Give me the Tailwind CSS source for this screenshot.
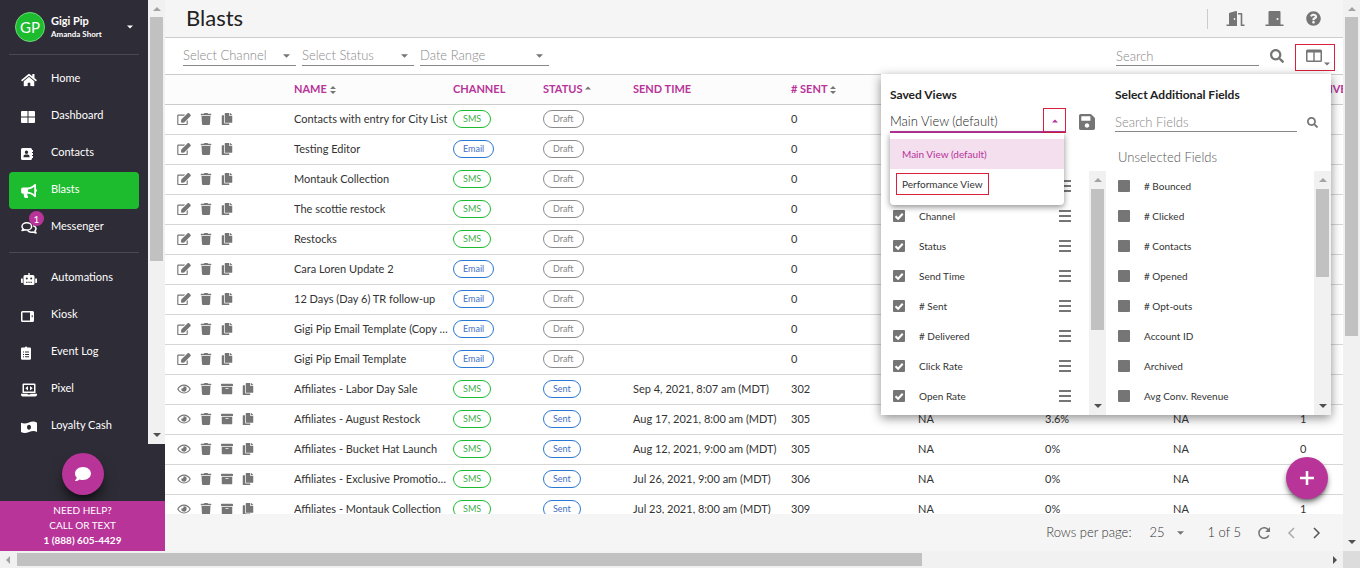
<!DOCTYPE html>
<html lang="en">
<head>
  <meta charset="UTF-8" />
  <meta name="viewport" content="width=device-width, initial-scale=1" />
  <title>Blasts</title>
  <script src="https://cdn.jsdelivr.net/npm/@tailwindcss/browser@4"></script>
</head>
<body class="h-screen flex flex-col overflow-hidden bg-white font-[Lato,'Open_Sans',sans-serif] text-[11px] text-[#333]">

  <!-- icon set -->
  <svg class="hidden">
    <symbol id="home" viewBox="0 0 576 512"><path d="M280.37 148.26L96 300.11V464a16 16 0 0 0 16 16l112.06-.29a16 16 0 0 0 15.92-16V368a16 16 0 0 1 16-16h64a16 16 0 0 1 16 16v95.64a16 16 0 0 0 16 16.05L464 480a16 16 0 0 0 16-16V300L295.67 148.26a12.19 12.19 0 0 0-15.3 0zM571.6 251.47L488 182.56V44.05a12 12 0 0 0-12-12h-56a12 12 0 0 0-12 12v72.61L318.47 43a48 48 0 0 0-61 0L4.34 251.47a12 12 0 0 0-1.6 16.9l25.5 31A12 12 0 0 0 45.15 301l235.22-193.74a12.19 12.19 0 0 1 15.3 0L530.9 301a12 12 0 0 0 16.9-1.6l25.5-31a12 12 0 0 0-1.7-16.93z"/></symbol>
    <symbol id="dashboard" viewBox="0 0 14 14" preserveAspectRatio="xMinYMid"><path d="M1 1h5.500v5.500H0V2a1 1 0 0 1 1-1zM7.500 1H13a1 1 0 0 1 1 1v4.500H7.500zM0 7.500h6.500V13H1a1 1 0 0 1-1-1zM7.500 7.500H14V12a1 1 0 0 1-1 1H7.500z"/></symbol>
    <symbol id="contacts" viewBox="0 0 14 14" preserveAspectRatio="xMinYMid"><path fill-rule="evenodd" d="M1.500 1h8A1.500 1.500 0 0 1 11 2.500v9a1.500 1.500 0 0 1-1.500 1.500h-8A1.500 1.500 0 0 1 0 11.500v-9A1.500 1.500 0 0 1 1.500 1zM5.500 3.500a1.700 1.700 0 1 0 0 3.400 1.700 1.700 0 0 0 0-3.400zM2.500 10.200h6v-.8C8.500 8.200 7.500 7.500 6.500 7.500H4.500C3.500 7.500 2.500 8.200 2.500 9.400z"/><path d="M11 3h1v2h-1zM11 6h1v2h-1zM11 9h1v2h-1z"/></symbol>
    <symbol id="bullhorn" viewBox="0 0 576 512"><path d="M576 240c0-23.63-12.95-44.04-32-55.12V32.01C544 23.26 537.02 0 512 0c-7.12 0-14.19 2.38-19.98 7.02l-85.03 68.03C364.28 109.19 310.66 128 256 128H64c-35.35 0-64 28.65-64 64v96c0 35.35 28.65 64 64 64h33.7c-1.39 10.48-2.18 21.14-2.18 32 0 39.77 9.26 77.35 25.56 110.94 5.19 10.69 16.52 17.06 28.4 17.06h74.28c26.05 0 41.69-29.84 25.9-50.56-16.4-21.52-26.15-48.36-26.15-77.44 0-11.11 1.62-21.79 4.41-32H256c54.66 0 108.28 18.81 150.98 52.95l85.03 68.03a32.023 32.023 0 0 0 19.98 7.02c24.92 0 32-22.78 32-32V295.13C563.05 284.04 576 263.63 576 240zm-96 141.42l-33.05-26.44C392.95 311.78 325.12 288 256 288v-96c69.12 0 136.95-23.78 190.95-66.98L480 98.58v282.84z"/></symbol>
    <symbol id="messenger" viewBox="0 0 16 14"><path fill="none" stroke="currentColor" stroke-width="1.500" stroke-linejoin="round" d="M5.800 1.800c2.700 0 4.800 1.500 4.800 3.600S8.500 9 5.800 9c-.7 0-1.400-.1-2-.3-.8.6-1.700.9-2.800.9.600-.6 1-1.200 1.200-1.900C1.400 7 1 6.200 1 5.400c0-2.100 2.100-3.600 4.800-3.600zM12 4.600c1.800.5 3 1.700 3 3.200 0 .8-.4 1.600-1.100 2.200.2.700.5 1.300 1.100 1.900-1.100 0-2-.3-2.800-.9-2.200.6-4.400 0-5.400-1.500"/></symbol>
    <symbol id="robot" viewBox="0 0 16 14"><path fill-rule="evenodd" d="M7.300 1h1.400v2H12a1.500 1.500 0 0 1 1.500 1.500V11.500A1.500 1.500 0 0 1 12 13H4a1.500 1.500 0 0 1-1.500-1.500v-7A1.500 1.500 0 0 1 4 3h3.300zM5.800 5.500a1 1 0 1 0 0 2 1 1 0 0 0 0-2zM10.200 5.500a1 1 0 1 0 0 2 1 1 0 0 0 0-2zM5 9.800v1h1.500v-1zM7.300 9.800v1h1.500v-1zM9.500 9.800v1H11v-1z"/><path d="M0 6.500h1.800V11H.8a.8.8 0 0 1-.8-.8zM14.200 6.500H16v3.700a.8.8 0 0 1-.8.8h-1z"/></symbol>
    <symbol id="kiosk" viewBox="0 0 14 14" preserveAspectRatio="xMinYMid"><path fill-rule="evenodd" d="M1 2h10.500A1.500 1.500 0 0 1 13 3.500v8a1.500 1.500 0 0 1-1.500 1.500H1.500A1.500 1.500 0 0 1 0 11.500V3.500A1.500 1.500 0 0 1 1.500 2zM1.500 3.600v7.800h7.500V3.600zM10.700 6.200v2h1v-2z"/></symbol>
    <symbol id="clipboard" viewBox="0 0 14 14" preserveAspectRatio="xMinYMid"><path fill-rule="evenodd" d="M3.800 1.500a1.300 1.300 0 0 1 2.500 0H8.800A1.200 1.200 0 0 1 10 2.700v9.800a1.200 1.200 0 0 1-1.200 1.200H1.200A1.200 1.200 0 0 1 0 12.500V2.700a1.200 1.200 0 0 1 1.200-1.200zM2 5.500v1h1v-1zM4 5.500v1h4v-1zM2 7.900v1h1v-1zM4 7.900v1h4v-1zM2 10.300v1h1v-1zM4 10.300v1h4v-1z"/></symbol>
    <symbol id="laptop" viewBox="0 0 16 14"><path fill-rule="evenodd" d="M2.500.5h11a1 1 0 0 1 1 1V10h-13V1.500a1 1 0 0 1 1-1zM3 2v6.500h10V2zM0 10.800h6.500l.5.700h2l.5-.7H16v1a1.700 1.700 0 0 1-1.700 1.700H1.700A1.700 1.700 0 0 1 0 11.800z"/><path d="M4.300 5.200L7 3v4.500zM11.700 5.200L9 3v4.500z"/></symbol>
    <symbol id="cash" viewBox="0 0 16 14"><path fill-rule="evenodd" d="M0 2.700C2.700 4 5.300 3.500 8 2.500s5.300-1.500 8 .2v9.200c-2.700-1.300-5.300-.8-8 .2s-5.300 1.500-8-.2zM8 4.800c-1.200 0-2 1.100-2 2.500s.8 2.500 2 2.500 2-1.100 2-2.500-.8-2.500-2-2.500z"/></symbol>
    <symbol id="trash" viewBox="0 0 448 512"><path d="M432 32H312l-9.400-18.700A24 24 0 0 0 281.100 0H166.800a23.720 23.720 0 0 0-21.400 13.300L136 32H16A16 16 0 0 0 0 48v32a16 16 0 0 0 16 16h416a16 16 0 0 0 16-16V48a16 16 0 0 0-16-16zM53.200 467a48 48 0 0 0 47.900 45h245.800a48 48 0 0 0 47.900-45L416 128H32z"/></symbol>
    <symbol id="edit" viewBox="0 0 576 512"><path d="M402.300 344.900l32-32c5-5 13.700-1.500 13.700 5.700V464c0 26.500-21.500 48-48 48H48c-26.500 0-48-21.500-48-48V112c0-26.500 21.500-48 48-48h273.500c7.100 0 10.700 8.600 5.700 13.700l-32 32c-1.500 1.500-3.500 2.300-5.700 2.300H48v352h352V350.500c0-2.100.8-4.100 2.300-5.600zM558.900 143.100L296.300 405.700l-90.400 10c-26.200 2.900-48.500-19.200-45.600-45.600l10-90.400L432.900 17.100c22.900-22.900 59.900-22.900 82.700 0l43.200 43.200c22.900 22.900 22.900 60 .1 82.800z"/></symbol>
    <symbol id="copy" viewBox="0 0 448 512"><path d="M320 448v40c0 13.255-10.745 24-24 24H24c-13.255 0-24-10.745-24-24V120c0-13.255 10.745-24 24-24h72v296c0 30.879 25.121 56 56 56h168zm0-344V0H152c-13.255 0-24 10.745-24 24v368c0 13.255 10.745 24 24 24h272c13.255 0 24-10.745 24-24V128H344c-13.200 0-24-10.800-24-24zm120.971-31.029L375.029 7.029A24 24 0 0 0 358.059 0H352v96h96v-6.059a24 24 0 0 0-7.029-16.970z"/></symbol>
    <symbol id="archive" viewBox="0 0 512 512"><path d="M32 448c0 17.700 14.300 32 32 32h384c17.700 0 32-14.300 32-32V160H32v288zm160-212c0-6.600 5.400-12 12-12h104c6.600 0 12 5.400 12 12v8c0 6.600-5.400 12-12 12H204c-6.600 0-12-5.400-12-12v-8zM480 32H32C14.300 32 0 46.300 0 64v48c0 8.800 7.200 16 16 16h480c8.800 0 16-7.200 16-16V64c0-17.700-14.300-32-32-32z"/></symbol>
    <symbol id="eye" viewBox="0 0 576 512"><path d="M288 144a110.940 110.940 0 0 0-31.240 5 55.400 55.400 0 0 1 7.240 27 56 56 0 0 1-56 56 55.400 55.400 0 0 1-27-7.240A111.710 111.710 0 1 0 288 144zm284.520 97.400C518.290 135.590 410.930 64 288 64S57.680 135.640 3.480 241.410a32.350 32.350 0 0 0 0 29.190C57.710 376.410 165.070 448 288 448s230.320-71.640 284.520-177.410a32.350 32.350 0 0 0 0-29.190zM288 400c-98.650 0-189.090-55-237.930-144C98.910 167 189.340 112 288 112s189.090 55 237.930 144C477.100 345 386.660 400 288 400z"/></symbol>
    <symbol id="search" viewBox="0 0 512 512"><path d="M505 442.700L405.300 343c-4.500-4.500-10.600-7-17-7H372c27.600-35.300 44-79.700 44-128C416 93.100 322.900 0 208 0S0 93.100 0 208s93.100 208 208 208c48.300 0 92.700-16.400 128-44v16.300c0 6.400 2.500 12.500 7 17l99.700 99.700c9.400 9.400 24.600 9.400 33.900 0l28.300-28.300c9.400-9.400 9.400-24.600.1-34zM208 336c-70.700 0-128-57.200-128-128 0-70.700 57.200-128 128-128 70.700 0 128 57.200 128 128 0 70.700-57.200 128-128 128z"/></symbol>
    <symbol id="columns" viewBox="0 0 16 14"><path fill-rule="evenodd" d="M1.500.5h13A1.500 1.500 0 0 1 16 2v9.500a1.500 1.500 0 0 1-1.500 1.500h-13A1.500 1.500 0 0 1 0 11.500V2A1.500 1.500 0 0 1 1.500.5zM1.500 3.500v8h5.800v-8zM8.700 3.500v8h5.800v-8z"/></symbol>
    <symbol id="save" viewBox="0 32 448 448"><path d="M433.941 129.941l-83.882-83.882A48 48 0 0 0 316.118 32H48C21.490 32 0 53.490 0 80v352c0 26.510 21.490 48 48 48h352c26.510 0 48-21.490 48-48V163.882a48 48 0 0 0-14.059-33.941zM224 416c-35.346 0-64-28.654-64-64 0-35.346 28.654-64 64-64s64 28.654 64 64c0 35.346-28.654 64-64 64zm96-304.520V212c0 6.627-5.373 12-12 12H76c-6.627 0-12-5.373-12-12V108c0-6.627 5.373-12 12-12h228.520c3.183 0 6.235 1.264 8.485 3.515l3.480 3.480A11.996 11.996 0 0 1 320 111.480z"/></symbol>
    <symbol id="comment" viewBox="0 0 512 512"><path d="M256 32C114.600 32 0 125.100 0 240c0 49.600 21.400 95 57 130.700C44.500 421.100 2.700 466 2.200 466.500c-2.200 2.300-2.800 5.700-1.500 8.700S4.800 480 8 480c66.300 0 116-31.800 140.600-51.400 32.700 12.300 69 19.400 107.400 19.400 141.400 0 256-93.100 256-208S397.400 32 256 32z"/></symbol>
    <symbol id="question" viewBox="0 0 512 512"><path d="M504 256c0 136.997-111.043 248-248 248S8 392.997 8 256C8 119.083 119.043 8 256 8s248 111.083 248 248zM262.655 90c-54.497 0-89.255 22.957-116.549 63.758-3.536 5.286-2.353 12.415 2.715 16.258l34.699 26.310c5.205 3.947 12.621 3.008 16.665-2.122 17.864-22.658 30.113-35.797 57.303-35.797 20.429 0 45.698 13.148 45.698 32.958 0 14.976-12.363 22.667-32.534 33.976C247.128 238.528 216 254.941 216 296v4c0 6.627 5.373 12 12 12h56c6.627 0 12-5.373 12-12v-1.333c0-28.462 83.186-29.647 83.186-106.667 0-58.002-60.165-102-116.531-102zM256 338c-25.365 0-46 20.635-46 46 0 25.364 20.635 46 46 46s46-20.636 46-46c0-25.365-20.635-46-46-46z"/></symbol>
    <symbol id="door-open" viewBox="0 0 18 16"><path fill-rule="evenodd" d="M10.500.7V15H0v-1.600h2.500V2.700c0-.5.3-.8.7-.9L9.400.1c.6-.2 1.100.1 1.100.6zM8 7a.8 1 0 1 0 0 2 .8 1 0 0 0 0-2z"/><path d="M11.500 2H15c.5 0 .8.400.8.800v10.600H18V15h-3.800V3.600h-2.700z"/></symbol>
    <symbol id="door" viewBox="0 0 18 16"><path fill-rule="evenodd" d="M4.200 0h9.600c.7 0 1.200.5 1.200 1.200v12.200h3V15H0v-1.600h3V1.200C3 .5 3.500 0 4.200 0zM12 6.900a1.100 1.100 0 1 0 0 2.200 1.100 1.100 0 0 0 0-2.200z"/></symbol>
    <symbol id="refresh" viewBox="0 0 14 14"><path fill="none" stroke="currentColor" stroke-width="1.500" d="M11.800 9.300A5.200 5.200 0 1 1 11.600 4.300"/><path d="M13 1v5H8.200z"/></symbol>
    <symbol id="caret-down" viewBox="0 0 8 4"><path d="M0 0h8L4 4z"/></symbol>
    <symbol id="caret-up" viewBox="0 0 8 4"><path d="M0 4h8L4 0z"/></symbol>
    <symbol id="caret-left" viewBox="0 0 4 8"><path d="M4 0v8L0 4z"/></symbol>
    <symbol id="caret-right" viewBox="0 0 4 8"><path d="M0 0v8l4-4z"/></symbol>
    <symbol id="sort" viewBox="0 0 6 8"><path d="M0 3h6L3 0zM0 5h6L3 8z"/></symbol>
    <symbol id="bars" viewBox="0 0 12 12"><path d="M0 0h12v2H0zM0 5h12v2H0zM0 10h12v2H0z"/></symbol>
    <symbol id="check" viewBox="0 0 12 12"><path fill="none" stroke="#fff" stroke-width="2" d="M2.500 6.200l2.600 2.600 4.600-5"/></symbol>
  </svg>

  <div class="flex-1 min-h-0 flex">
    <aside class="w-[165px] shrink-0 flex flex-col bg-[#2e2c36] text-white">
      <div class="flex-1 min-h-0 flex">
        <div class="flex-1 min-w-0 px-[9px] overflow-hidden">
          <button class="w-full h-[55px] flex items-center gap-1.5 px-1.5 border-b border-[#4a4852] text-left">
            <span class="size-[30px] rounded-full bg-[#1dbc2f] border border-[#6fd67a] grid place-items-center text-[15px] leading-4">GP</span>
            <span class="flex-1">
              <span class="block text-[11px] leading-[14px] font-bold">Gigi Pip</span>
              <span class="block text-[8px] leading-3 font-bold">Amanda Short</span>
            </span>
            <svg class="w-1.5 h-1 fill-current"><use href="#caret-down"/></svg>
          </button>
          <nav id="navTop" class="pt-1.5 pb-1.5 border-b border-[#4a4852]"></nav>
          <nav id="navBottom" class="pt-[7px]"></nav>
        </div>
        <div class="w-[17px] flex flex-col items-center bg-[#f1f1f1]">
          <svg class="w-2 h-1 mt-[7px] mb-1.5 fill-[#a3a3a3]"><use href="#caret-up"/></svg>
          <div class="w-[13px] h-[244px] bg-[#c1c1c1]"></div>
          <svg class="w-2 h-1 mt-auto mb-[7px] fill-[#505050]"><use href="#caret-down"/></svg>
        </div>
      </div>
      <div class="h-[57px] pt-0.5 grid place-items-center">
        <button aria-label="Chat" class="size-[42px] rounded-full bg-[#b83499] grid place-items-center shadow-lg shadow-black/60"><svg class="size-4 fill-current"><use href="#comment"/></svg></button>
      </div>
      <div class="bg-[#b83499] h-[50px] pt-0.5 text-center text-[10px] leading-[15px]">
        <p>NEED HELP?</p>
        <p>CALL OR TEXT</p>
        <p class="font-bold">1 (888) 605-4429</p>
      </div>
    </aside>

    <main class="relative flex-1 min-w-0 flex flex-col">
      <header class="h-[38px] shrink-0 flex items-center pl-[21px] pr-[22px] bg-[#f5f5f5] border-b border-[#ccc] text-[#757575]">
        <h1 class="flex-1 pb-0.5 text-[22px] leading-6 text-[#222]">Blasts</h1>
        <div class="flex items-center h-5 border-l border-[#ccc] pl-[18px] gap-5">
          <button aria-label="Check in"><svg class="w-[19px] h-4 fill-current"><use href="#door-open"/></svg></button>
          <button aria-label="Sign out"><svg class="w-[19px] h-4 fill-current"><use href="#door"/></svg></button>
          <button aria-label="Help" class="ml-0.5"><svg class="size-[15px] fill-current"><use href="#question"/></svg></button>
        </div>
      </header>

      <div class="h-[37px] shrink-0 flex items-center pl-[18px] pr-2 gap-1.5 border-b border-[#ccc] text-[13px] text-[#757575]">
        <label class="relative w-[113px]">
          <select aria-label="Select Channel" class="w-full h-5 appearance-none border-b border-[#888] font-light text-[#888]"><option>Select Channel</option></select>
          <svg class="absolute right-1.5 top-2 w-[7px] h-1 fill-current"><use href="#caret-down"/></svg>
        </label>
        <label class="relative w-[112px]">
          <select aria-label="Select Status" class="w-full h-5 appearance-none border-b border-[#888] font-light text-[#888]"><option>Select Status</option></select>
          <svg class="absolute right-1.5 top-2 w-[7px] h-1 fill-current"><use href="#caret-down"/></svg>
        </label>
        <label class="relative w-[129px]">
          <select aria-label="Date Range" class="w-full h-5 appearance-none border-b border-[#888] font-light text-[#888]"><option>Date Range</option></select>
          <svg class="absolute right-1.5 top-2 w-[7px] h-1 fill-current"><use href="#caret-down"/></svg>
        </label>
        <input type="text" aria-label="Search" placeholder="Search" class="ml-auto w-[143px] h-5 border-b border-[#888] font-light placeholder:text-[#888]" />
        <button aria-label="Run search" class="mx-[5px]"><svg class="size-3.5 fill-current"><use href="#search"/></svg></button>
        <button aria-label="Choose columns" class="w-10 h-[27px] mt-0.5 flex items-center justify-center pl-1.5 border border-[#d9203f]">
          <svg class="w-4 h-3.5 mb-0.5 fill-current"><use href="#columns"/></svg>
          <svg class="w-1.5 h-1 mt-3.5 ml-0.5 fill-current"><use href="#caret-down"/></svg>
        </button>
      </div>

      <div class="flex-1 min-h-0 overflow-hidden">
        <table class="w-full min-w-[1235px] table-fixed border-collapse text-left">
          <colgroup>
            <col class="w-[129px]"><col class="w-[159px]"><col class="w-[90px]"><col class="w-[90px]"><col class="w-[158px]">
            <col class="w-[127px]"><col class="w-[127px]"><col class="w-[128px]"><col class="w-[127px]"><col>
          </colgroup>
          <thead class="bg-[#fcfcfc] text-[#b83499] text-[11px] leading-4 whitespace-nowrap">
            <tr class="h-[29px] border-b border-[#ccc]">
              <th></th>
              <th>NAME <svg class="inline w-1.5 h-2 fill-[#757575]"><use href="#sort"/></svg></th>
              <th>CHANNEL</th>
              <th>STATUS <svg class="inline w-1.5 h-1 mb-1 fill-[#757575]"><use href="#caret-up"/></svg></th>
              <th>SEND TIME</th>
              <th># SENT <svg class="inline w-1.5 h-2 fill-[#757575]"><use href="#sort"/></svg></th>
              <th>CLICK RATE</th>
              <th>OPEN RATE</th>
              <th>CONV. RATE</th>
              <th># DELIVERED</th>
            </tr>
          </thead>
          <tbody id="rows"></tbody>
        </table>
      </div>

      <footer class="h-[37px] shrink-0 flex items-center justify-end pr-[22px] bg-[#f5f5f5] text-[13px] text-[#333]">
        <label for="perPage" class="font-light">Rows per page:</label>
        <span class="relative ml-[18px] mr-6">
          <select id="perPage" class="w-[34px] appearance-none font-light"><option>25</option></select>
          <svg class="absolute right-0 top-2 w-[7px] h-1 fill-[#757575]"><use href="#caret-down"/></svg>
        </span>
        <span class="font-light">1 of 5</span>
        <button aria-label="Refresh" class="ml-4 text-[#757575]"><svg class="size-3.5 fill-current"><use href="#refresh"/></svg></button>
        <button aria-label="Previous page" class="ml-4"><svg class="w-2 h-3 fill-none stroke-[#aaa] stroke-[1.5]" viewBox="0 0 8 12"><path d="M7 1L2 6l5 5"/></svg></button>
        <button aria-label="Next page" class="ml-[18px]"><svg class="w-2 h-3 fill-none stroke-[#555] stroke-[1.5]" viewBox="0 0 8 12"><path d="M1 1l5 5-5 5"/></svg></button>
      </footer>

      <!-- column picker -->
      <section class="absolute top-[74px] right-3 w-[450px] h-[341px] flex bg-white shadow-[0_3px_10px_rgba(0,0,0,0.45)]">
        <div class="relative w-[225px] flex flex-col">
          <div class="h-[97px] shrink-0 pl-[9px] pt-3">
            <h2 class="text-xs leading-[18px] font-bold text-[#222]">Saved Views</h2>
            <div class="flex items-center gap-3.5">
              <label class="relative w-[175px]">
                <select aria-label="Saved Views" class="w-full h-[29px] pt-2 appearance-none border-b-2 border-[#b83499] text-[13px] font-light text-[#222]"><option>Main View (default)</option></select>
                <span class="absolute -right-px top-1 w-[23px] h-[25px] grid place-items-center border border-[#d9203f]"><svg class="w-1.5 h-1 fill-[#b83499]"><use href="#caret-up"/></svg></span>
              </label>
              <button aria-label="Save view" class="pt-1.5"><svg class="size-4 fill-[#757575]"><use href="#save"/></svg></button>
            </div>
          </div>
          <div class="flex-1 min-h-0 flex">
            <ul id="selected" class="flex-1 overflow-hidden pl-3 pr-[18px] text-[10px]"></ul>
            <div class="w-[17px] flex flex-col items-center bg-[#f1f1f1]">
              <svg class="w-2 h-1 my-[7px] fill-[#a3a3a3]"><use href="#caret-up"/></svg>
              <div class="w-[13px] h-[141px] bg-[#c1c1c1]"></div>
              <svg class="w-2 h-1 mt-auto mb-[7px] fill-[#505050]"><use href="#caret-down"/></svg>
            </div>
          </div>
          <ul role="listbox" class="absolute left-[9px] top-[59px] w-[174px] pt-1.5 pb-1.5 bg-white rounded-b-sm text-[10px] shadow-[0_2px_6px_rgba(0,0,0,0.45)]">
            <li role="option" aria-selected="true" class="h-[30px] flex items-center px-3 bg-[#f3dfee] text-[#b83499]">Main View (default)</li>
            <li role="option" class="h-[30px] flex items-center px-1.5"><span class="h-[22px] flex items-center px-[5px] border border-[#d9203f]">Performance View</span></li>
          </ul>
        </div>
        <div class="flex-1 flex flex-col">
          <div class="h-[97px] shrink-0 pl-[9px] pt-3">
            <h2 class="text-xs leading-[18px] font-bold text-[#222]">Select Additional Fields</h2>
            <div class="flex items-center gap-2.5">
              <input type="text" aria-label="Search Fields" placeholder="Search Fields" class="w-[182px] h-7 pt-2 border-b border-[#888] text-[13px] font-light placeholder:text-[#888]" />
              <button aria-label="Find field"><svg class="size-[11px] mt-2 fill-[#757575]"><use href="#search"/></svg></button>
            </div>
            <h3 class="pl-[3px] pt-4 text-[13px] leading-[18px] font-light text-[#555]">Unselected Fields</h3>
          </div>
          <div class="flex-1 min-h-0 flex">
            <ul id="unselected" class="flex-1 overflow-hidden pl-3 text-[10px]"></ul>
            <div class="w-[17px] flex flex-col items-center bg-[#f1f1f1]">
              <svg class="w-2 h-1 my-[7px] fill-[#a3a3a3]"><use href="#caret-up"/></svg>
              <div class="w-[13px] h-[88px] bg-[#c1c1c1]"></div>
              <svg class="w-2 h-1 mt-auto mb-[7px] fill-[#505050]"><use href="#caret-down"/></svg>
            </div>
          </div>
        </div>
      </section>

      <button aria-label="New blast" class="absolute right-[15px] bottom-[52px] size-[42px] rounded-full bg-[#b83499] grid place-items-center shadow-md shadow-black/50">
        <svg class="size-3.5 fill-none stroke-white stroke-[2.5]" viewBox="0 0 14 14"><path d="M7 0v14M0 7h14"/></svg>
      </button>
    </main>

    <div class="w-[17px] shrink-0 flex flex-col items-center bg-[#f1f1f1]">
      <svg class="w-2 h-1 mt-[7px] mb-1.5 fill-[#a3a3a3]"><use href="#caret-up"/></svg>
      <div class="w-[13px] h-[319px] bg-[#c1c1c1]"></div>
      <svg class="w-2 h-1 mt-auto mb-[7px] fill-[#505050]"><use href="#caret-down"/></svg>
    </div>
  </div>

  <div class="h-[17px] shrink-0 flex items-center bg-[#f1f1f1]">
    <svg class="w-1 h-2 ml-1.5 mr-[7px] fill-[#a3a3a3]"><use href="#caret-left"/></svg>
    <div class="w-[905px] h-[13px] bg-[#c1c1c1]"></div>
    <svg class="w-1 h-2 ml-auto mr-1.5 fill-[#505050]"><use href="#caret-right"/></svg>
    <div class="w-[17px] h-full bg-[#dcdcdc]"></div>
  </div>

  <script>
    const navTop = [['home', 'Home'], ['dashboard', 'Dashboard'], ['contacts', 'Contacts'], ['bullhorn', 'Blasts'], ['messenger', 'Messenger']];
    const navBottom = [['robot', 'Automations'], ['kiosk', 'Kiosk'], ['clipboard', 'Event Log'], ['laptop', 'Pixel'], ['cash', 'Loyalty Cash']];

    const navLink = ([icon, label]) => `
      <a href="#" class="relative h-[37px] flex items-center gap-3.5 pl-3 pb-0.5 rounded ${label === 'Blasts' ? 'bg-[#1dbc2f]' : ''}">
        <svg class="w-4 h-3.5 mt-0.5 fill-current"><use href="#${icon}"/></svg>${label}
        ${label === 'Messenger' ? '<span class="absolute left-5 top-0.5 size-[15px] rounded-full bg-[#b83499] grid place-items-center text-[10px] leading-3">1</span>' : ''}
      </a>`;
    document.getElementById('navTop').innerHTML = navTop.map(navLink).join('');
    document.getElementById('navBottom').innerHTML = navBottom.map(navLink).join('');

    // name, channel, send time, sent, click, open, conversion, delivered
    const blasts = [
      ['Contacts with entry for City List', 'SMS'],
      ['Testing Editor', 'Email'],
      ['Montauk Collection', 'SMS'],
      ['The scottie restock', 'SMS'],
      ['Restocks', 'SMS'],
      ['Cara Loren Update 2', 'Email'],
      ['12 Days (Day 6) TR follow-up', 'Email'],
      ['Gigi Pip Email Template (Copy Main)', 'Email'],
      ['Gigi Pip Email Template', 'Email'],
      ['Affiliates - Labor Day Sale', 'SMS', 'Sep 4, 2021, 8:07 am (MDT)', '302', 'NA', '0%', 'NA', '0'],
      ['Affiliates - August Restock', 'SMS', 'Aug 17, 2021, 8:00 am (MDT)', '305', 'NA', '3.6%', 'NA', '1'],
      ['Affiliates - Bucket Hat Launch', 'SMS', 'Aug 12, 2021, 9:00 am (MDT)', '305', 'NA', '0%', 'NA', '0'],
      ['Affiliates - Exclusive Promotional Offer', 'SMS', 'Jul 26, 2021, 9:00 am (MDT)', '306', 'NA', '0%', 'NA', '0'],
      ['Affiliates - Montauk Collection', 'SMS', 'Jul 23, 2021, 8:00 am (MDT)', '309', 'NA', '0%', 'NA', '1'],
    ];
    const pill = {
      SMS: 'border-[#1dbc2f] text-[#3fae4b]',
      Email: 'border-[#2a77d4] text-[#3f6fc4]',
      Sent: 'border-[#2a77d4] text-[#3f6fc4]',
      Draft: 'border-[#8a8a8a] text-[#888]',
    };
    const tag = t => `<span class="h-[18px] w-fit flex items-center px-[9px] pb-px rounded-full border text-[9px] leading-3 ${pill[t]}">${t}</span>`;
    const action = i => `<button aria-label="${i}"><svg class="${i === 'edit' || i === 'eye' ? 'w-3.5' : 'w-3'} h-3 fill-current"><use href="#${i}"/></svg></button>`;

    document.getElementById('rows').innerHTML = blasts.map(([name, channel, time = '', sent = '0', ...rest]) => `
      <tr class="h-[30px] border-b border-[#d6d6d6] whitespace-nowrap">
        <td><div class="flex items-center gap-[9px] pl-3 text-[#757575]">${(time ? ['eye', 'trash', 'archive', 'copy'] : ['edit', 'trash', 'copy']).map(action).join('')}</div></td>
        <td><div class="w-[157px] truncate">${name}</div></td>
        <td>${tag(channel)}</td>
        <td>${tag(time ? 'Sent' : 'Draft')}</td>
        <td>${time}</td>
        <td>${sent}</td>
        ${[0, 1, 2, 3].map(i => `<td>${rest[i] || ''}</td>`).join('')}
      </tr>`).join('');

    const field = checked => name => `
      <li class="h-[30px] flex items-center justify-between">
        <label class="flex items-center gap-3.5">
          <span class="grid size-3">
            <input type="checkbox" ${checked ? 'checked' : ''} class="peer col-start-1 row-start-1 size-3 appearance-none rounded-[1px] bg-[#757575]" />
            <svg class="col-start-1 row-start-1 size-3 hidden peer-checked:block pointer-events-none"><use href="#check"/></svg>
          </span>${name}
        </label>
        ${checked ? '<svg class="size-3 fill-[#757575]"><use href="#bars"/></svg>' : ''}
      </li>`;
    document.getElementById('selected').innerHTML = ['Name', 'Channel', 'Status', 'Send Time', '# Sent', '# Delivered', 'Click Rate', 'Open Rate'].map(field(true)).join('');
    document.getElementById('unselected').innerHTML = ['# Bounced', '# Clicked', '# Contacts', '# Opened', '# Opt-outs', 'Account ID', 'Archived', 'Avg Conv. Revenue'].map(field(false)).join('');
  </script>
</body>
</html>
